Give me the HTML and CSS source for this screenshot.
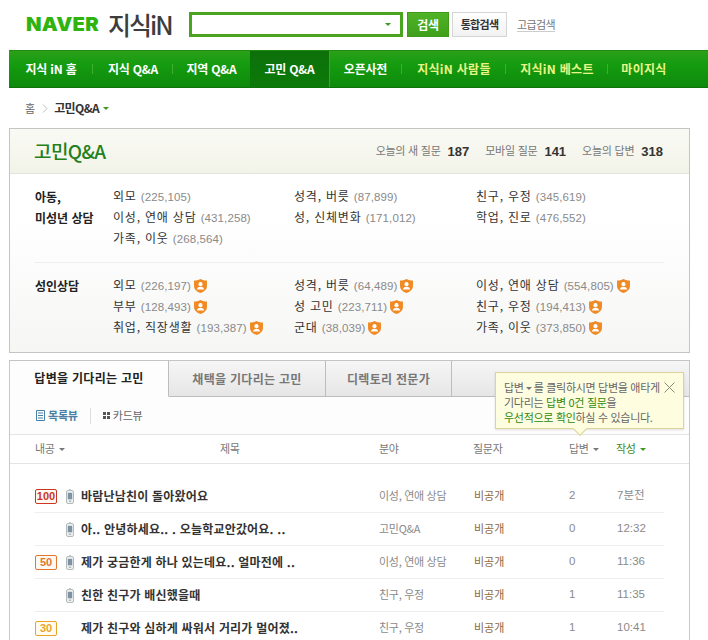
FILE: index.html
```html
<!DOCTYPE html>
<html lang="ko">
<head>
<meta charset="utf-8">
<title>고민Q&amp;A</title>
<link rel="stylesheet" href="styles.css">
</head>
<body>
<header class="top">
  <div class="logo"><span class="naver">NAVER</span><span class="kin">지식iN</span></div>
  <div class="search"><i class="caret green"></i></div>
  <button class="btn-search">검색</button>
  <button class="btn-all">통합검색</button>
  <a class="adv">고급검색</a>
</header>
<nav class="nav">
  <a>지식 iN 홈</a><a>지식 Q&amp;A</a><a class="nosep">지역 Q&amp;A</a><a class="on">고민 Q&amp;A</a><a>오픈사전</a><a class="y">지식iN 사람들</a><a class="y">지식iN 베스트</a><a class="y nosep">마이지식</a>
</nav>
<div class="crumb"><span class="home">홈</span><svg class="chev" width="6" height="9" viewBox="0 0 6 9"><path d="M1 .5l4 4-4 4" fill="none" stroke="#bbb"/></svg><b>고민Q&amp;A</b><i class="caret green"></i></div>

<section class="panel">
  <div class="panel-head">
    <h1>고민Q&amp;A</h1>
    <div class="stats"><span>오늘의 새 질문</span><b>187</b><span>모바일 질문</span><b>141</b><span>오늘의 답변</span><b>318</b></div>
  </div>
  <div class="cats first">
    <h2>아동,<br>미성년 상담</h2>
    <div class="col">
      <a>외모 <em>(225,105)</em></a><a>이성, 연애 상담 <em>(431,258)</em></a><a>가족, 이웃 <em>(268,564)</em></a>
    </div>
    <div class="col">
      <a>성격, 버릇 <em>(87,899)</em></a><a>성, 신체변화 <em>(171,012)</em></a>
    </div>
    <div class="col">
      <a>친구, 우정 <em>(345,619)</em></a><a>학업, 진로 <em>(476,552)</em></a>
    </div>
  </div>
  <div class="cats second">
    <h2>성인상담</h2>
    <div class="col">
      <a>외모 <em>(226,197)</em><svg class="shield" viewBox="1 .5 12 13"><use href="#sh"/></svg></a>
      <a>부부 <em>(128,493)</em><svg class="shield" viewBox="1 .5 12 13"><use href="#sh"/></svg></a>
      <a>취업, 직장생활 <em>(193,387)</em><svg class="shield" viewBox="1 .5 12 13"><use href="#sh"/></svg></a>
    </div>
    <div class="col">
      <a>성격, 버릇 <em>(64,489)</em><svg class="shield" viewBox="1 .5 12 13"><use href="#sh"/></svg></a>
      <a>성 고민 <em>(223,711)</em><svg class="shield" viewBox="1 .5 12 13"><use href="#sh"/></svg></a>
      <a>군대 <em>(38,039)</em><svg class="shield" viewBox="1 .5 12 13"><use href="#sh"/></svg></a>
    </div>
    <div class="col">
      <a>이성, 연애 상담 <em>(554,805)</em><svg class="shield" viewBox="1 .5 12 13"><use href="#sh"/></svg></a>
      <a>친구, 우정 <em>(194,413)</em><svg class="shield" viewBox="1 .5 12 13"><use href="#sh"/></svg></a>
      <a>가족, 이웃 <em>(373,850)</em><svg class="shield" viewBox="1 .5 12 13"><use href="#sh"/></svg></a>
    </div>
  </div>
</section>

<section class="board">
  <div class="tabs">
    <a class="tab active">답변을 기다리는 고민</a><a class="tab t2">채택을 기다리는 고민</a><a class="tab t3">디렉토리 전문가</a>
  </div>
  <div class="tip">
    <p>답변<i class="caret gray"></i>를 클릭하시면 답변을 애타게<br>기다리는 <strong>답변 0건 질문</strong>을<br><strong>우선적으로 확인</strong>하실 수 있습니다.</p>
    <svg class="close" width="11" height="11" viewBox="0 0 11 11"><path d="M.5.5l10 10M10.5.5l-10 10" stroke="#8a8a7a" fill="none"/></svg>
    <span class="tip-arrow"></span>
  </div>
  <div class="views">
    <a class="view sel"><svg width="9" height="11" viewBox="0 0 9 11"><path d="M.5.5h8v10h-8zM2 3h5M2 5.5h5M2 8h5" fill="none" stroke="#4a7fa5"/></svg>목록뷰</a>
    <a class="view"><svg width="7" height="7" viewBox="0 0 7 7"><path d="M0 0h3v3H0zM4 0h3v3H4zM0 4h3v3H0zM4 4h3v3H4z" fill="#555"/></svg>카드뷰</a>
  </div>
  <div class="thead">
    <span>내공<i class="caret gray"></i></span><span class="th-title">제목</span><span>분야</span><span>질문자</span><span>답변<i class="caret gray"></i></span><span class="sort">작성<i class="caret green"></i></span>
  </div>
  <ul class="rows">
    <li><span class="bd b100">100</span><svg class="ph" viewBox="0 0 8 15"><use href="#ph"/></svg><a class="ti">바람난남친이 돌아왔어요</a><span class="fd">이성, 연애 상담</span><span class="au">비공개</span><span class="num">2</span><span class="num">7분전</span></li>
    <li><span></span><svg class="ph" viewBox="0 0 8 15"><use href="#ph"/></svg><a class="ti">아.. 안녕하세요.. . 오늘학교안갔어요. ..</a><span class="fd">고민Q&amp;A</span><span class="au">비공개</span><span class="num">0</span><span class="num">12:32</span></li>
    <li><span class="bd b50">50</span><svg class="ph" viewBox="0 0 8 15"><use href="#ph"/></svg><a class="ti">제가 궁금한게 하나 있는데요.. 얼마전에 ..</a><span class="fd">이성, 연애 상담</span><span class="au">비공개</span><span class="num">0</span><span class="num">11:36</span></li>
    <li><span></span><svg class="ph" viewBox="0 0 8 15"><use href="#ph"/></svg><a class="ti">친한 친구가 배신했을때</a><span class="fd">친구, 우정</span><span class="au">비공개</span><span class="num">1</span><span class="num">11:35</span></li>
    <li><span class="bd b30">30</span><span></span><a class="ti">제가 친구와 심하게 싸워서 거리가 멀어졌..</a><span class="fd">친구, 우정</span><span class="au">비공개</span><span class="num">1</span><span class="num">10:41</span></li>
  </ul>
</section>

<svg class="defs" width="0" height="0">
  <defs>
    <g id="sh"><path d="M7 .5C9 1.6 11 2 13 2v5c0 3.200-2.800 5.400-6 6.500C3.800 12.400 1 10.200 1 7V2c2 0 4-.4 6-1.500z" fill="#f08a24"/><circle cx="7" cy="5.300" r="1.900" fill="#fff"/><path d="M3.600 10.200c.4-1.700 1.800-2.400 3.400-2.400s3 .7 3.400 2.400z" fill="#fff"/></g>
    <g id="ph"><rect x=".5" y="1.500" width="7" height="13" rx="1.500" fill="#eef1f1" stroke="#b4baba"/><rect x="1.800" y="3.800" width="4.400" height="6.500" fill="#7d93a5"/><rect x="3" y="0" width="2" height="1.500" fill="#c0c4c4"/><rect x="2.800" y="11.600" width="2.400" height="1.200" fill="#a6acac"/></g>
  </defs>
</svg>
</body>
</html>
```
FILE: styles.css
```css
* { box-sizing: border-box; }
html, body { margin: 0; height: 640px; overflow: hidden; background: #fff; }
body { font: 12px/1.2 "Noto Sans CJK KR", "Liberation Sans", sans-serif; color: #333; }
a { color: inherit; text-decoration: none; }
h1, h2, p, ul { margin: 0; padding: 0; }
ul { list-style: none; }
em { font-style: normal; }

.caret { display: inline-block; width: 0; height: 0; margin-left: 4px; vertical-align: 2px; border: 3px solid transparent; border-bottom-width: 0; border-top: 3px solid #666; }
.caret.green { border-top-color: #3d9a1e; }
.caret.gray { border-top-color: #777; }

/* header */
.top { display: flex; align-items: center; height: 50px; padding: 12px 0 13px 26px; }
.logo { display: flex; align-items: center; width: 163px; }
.naver { display: block; width: 82px; font: 900 19px/1 Inter, "Liberation Sans", sans-serif; color: #2fb30f; letter-spacing: .2px; transform: scaleX(1.065); transform-origin: left; }
.kin { font: 500 25px/1 "Noto Sans CJK KR", sans-serif; color: #3d3d3d; letter-spacing: -2px; }
.search { display: flex; align-items: center; justify-content: flex-end; width: 214px; height: 25px; padding-right: 9px; border: 3px solid #4aa41f; background: #fff; }
.btn-search { width: 42px; height: 25px; margin-left: 4px; padding: 0; border: 1px solid #3f9a1a; background: linear-gradient(#4fb327, #3f9f1a); color: #fff; font: 700 12px/1 "Noto Sans CJK KR", sans-serif; letter-spacing: -.3px; }
.btn-all { width: 55px; height: 25px; margin-left: 3px; padding: 0; border: 1px solid #d5d5d5; background: linear-gradient(#fff, #f2f2f2); color: #333; font: 700 11px/1 "Noto Sans CJK KR", sans-serif; letter-spacing: -.7px; }
.adv { margin-left: 10px; border-bottom: 1px solid #ccc; color: #777; font-size: 11px; line-height: 14px; letter-spacing: -.6px; }

/* nav */
.nav { display: grid; grid-template-columns: 84px 80px 77px 79px 73px 104px 102px 72px; height: 38px; margin-left: 9px; background: linear-gradient(#2ba019, #159c10 35%, #0e8a0c); border-top: 1px solid #208c14; border-bottom: 1px solid #0f730c; }
.nav a { position: relative; display: flex; align-items: center; justify-content: center; color: #fff; font-weight: 700; font-size: 12px; letter-spacing: -.2px; white-space: nowrap; }
.nav a::after { content: ""; position: absolute; right: 0; top: 13px; height: 10px; width: 1px; background: #3fae30; }
.nav a.nosep::after, .nav a.on::after { display: none; }
.nav a.on { background: linear-gradient(#0d700a, #0b7a09); box-shadow: 1px 0 0 #32a827; }
.nav a.y { color: #eaf587; letter-spacing: .3px; }

/* breadcrumb */
.crumb { display: flex; align-items: center; height: 40px; padding: 1px 0 0 25px; color: #666; font-size: 11px; }
.chev { margin: 0 6px 0 7px; }
.crumb b { color: #333; font-size: 12px; letter-spacing: -.6px; }

/* summary panel */
.panel { width: 681px; height: 225px; margin-left: 9px; border: 1px solid #c4c4c4; background: linear-gradient(#fff 40%, #f6f6f5); }
.panel-head { display: flex; align-items: center; justify-content: space-between; height: 45px; padding: 0 26px 0 24px; border-bottom: 1px solid #e4e6dc; background: linear-gradient(#fafaf5, #f2f3e8); }
.panel-head h1 { color: #23801b; font-size: 19px; font-weight: 500; letter-spacing: -.6px; }
.stats { display: flex; align-items: center; color: #777; font-size: 11px; letter-spacing: -.25px; }
.stats b { margin: 0 16px 0 7px; color: #333; font: 700 13px "Liberation Sans", sans-serif; letter-spacing: 0; }
.stats b:last-child { margin-right: 0; }
.cats { display: grid; grid-template-columns: 78px 181px 182px 1fr; margin: 0 25px; }
.cats.first { height: 89px; padding-top: 12px; border-bottom: 1px solid #eee; }
.cats.second { padding-top: 12px; }
.cats h2 { color: #222; font-size: 12px; font-weight: 700; line-height: 21px; letter-spacing: 0; }
.col { display: flex; flex-direction: column; }
.col a { display: flex; align-items: center; height: 21px; color: #333; font-size: 12px; letter-spacing: .8px; white-space: pre; }
.col em { color: #8a8a8a; font: 11.500px "Liberation Sans", sans-serif; letter-spacing: .1px; }
.shield { width: 13px; height: 14px; margin-left: 3px; }

/* board */
.board { position: relative; width: 681px; height: 290px; margin: 7px 0 0 9px; border: 1px solid #c8c8c8; border-bottom: 0; border-top-color: #c4c4c4; }
.tabs { display: flex; height: 36px; background: linear-gradient(#f6f6f6, #e6e6e6); border-bottom: 1px solid #bdbdbd; }
.tab { display: flex; align-items: center; justify-content: center; height: 36px; border-right: 1px solid #bdbdbd; color: #777; font-size: 12px; font-weight: 700; letter-spacing: .3px; }
.tab.active { width: 159px; background: #fdfdfd; border-bottom: 1px solid #fdfdfd; color: #222; }
.tab.t2 { width: 157px; }
.tab.t3 { width: 126px; }

.tip { position: absolute; left: 485px; top: 11px; width: 189px; height: 57px; padding: 7px 0 0 8px; border: 1px solid #dcd49a; background: #fffde0; box-shadow: 0 1px 2px rgba(0,0,0,.12); color: #666; font-size: 11px; line-height: 15px; letter-spacing: -.3px; }
.tip strong { color: #2f8a0e; font-weight: 400; }
.close { position: absolute; right: 8px; top: 9px; }
.tip-arrow { position: absolute; left: 79px; bottom: -6px; width: 10px; height: 10px; background: #fffde0; border: solid #dcd49a; border-width: 0 1px 1px 0; transform: rotate(45deg); }
.tip .caret { margin: 0 2px; }

.views { display: flex; align-items: center; height: 37px; padding-left: 26px; background: #fdfdfd; }
.view { display: flex; align-items: center; gap: 3px; color: #666; font-size: 11px; letter-spacing: -.2px; }
.view.sel { height: 16px; padding-right: 12px; margin-right: 12px; border-right: 1px solid #ddd; color: #4a7fa5; font-weight: 700; }

.thead { display: grid; grid-template-columns: 185px 159px 94px 96px 47px 1fr; align-items: center; height: 30px; padding-left: 25px; border-top: 1px solid #e4e4e4; border-bottom: 1px solid #e4e4e4; color: #777; font-size: 11px; letter-spacing: -.3px; }
.sort { color: #3d8a22; }

.rows { margin: 16px 25px 0; }
.rows li { display: grid; grid-template-columns: 30px 16px 298px 95px 95px 48px 1fr; align-items: center; height: 33px; border-bottom: 1px solid #eee; }
.bd { display: block; width: 22px; height: 15px; border: 1px solid; border-radius: 2px; text-align: center; font: 700 11px/13px "Liberation Sans", sans-serif; }
.b100 { color: #c9391f; border-color: #c9391f; background: #fff7f4; }
.b50 { color: #e2762f; border-color: #e2762f; background: #fff9f3; }
.b30 { color: #e9a52a; border-color: #e9a52a; background: #fffbef; }
.ph { width: 8px; height: 15px; margin-left: 1px; }
.ti { color: #333; font-size: 12px; font-weight: 700; letter-spacing: .2px; white-space: nowrap; }
.fd { color: #8a8a8a; font-size: 11px; letter-spacing: -.3px; white-space: nowrap; }
.au { color: #8c6a3f; font-size: 11px; }
.num { color: #8a8a8a; font-size: 11.500px; font-family: "Liberation Sans", "Noto Sans CJK KR", sans-serif; }
.defs { position: absolute; }
```
